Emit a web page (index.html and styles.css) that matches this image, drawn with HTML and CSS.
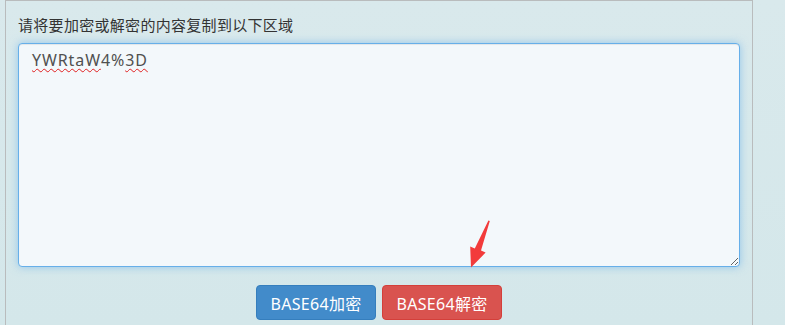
FILE: index.html
```html
<!DOCTYPE html>
<html lang="zh-CN">
<head>
  <meta charset="UTF-8">
  <meta name="viewport" content="width=device-width, initial-scale=1.0">
  <title>BASE64加密解密</title>
  <link rel="stylesheet" href="styles.css">
</head>
<body>
  <div class="panel">
    <label class="tip" for="content">请将要加密或解密的内容复制到以下区域</label>
    <div class="content" id="content" contenteditable="true" spellcheck="false"><span class="typo">YWRtaW</span>4%<span class="typo">3D</span></div>
    <div class="actions">
      <button class="btn btn-blue" id="encode-btn">BASE64加密</button>
      <button class="btn btn-red" id="decode-btn">BASE64解密</button>
    </div>
  </div>

  <!-- red pointer arrow over the decode button -->
  <svg class="arrow" width="785" height="325" viewBox="0 0 785 325">
    <polygon points="489.8,221 481,250.6 485.6,252.6 471,267.5 470.2,246.5 474.8,248.4 488.4,220.6" fill="#f23b3b"/>
  </svg>
</body>
</html>
```

FILE: styles.css
```css
body {
  margin: 0;
  height: 325px;
  overflow: hidden;
  background: linear-gradient(to bottom, #d9e9ec, #d4e7ea);
  font-family: "Noto Sans", "Noto Sans CJK SC", sans-serif;
  color: #333;
}

.panel {
  margin-left: 5px;
  width: 748px;
  height: 340px;
  box-sizing: border-box;
  border: 1px solid #b9bcbd;
  border-bottom: none;
  padding: 13px 12px 0;
  background: transparent;
}

.tip {
  display: block;
  font-size: 15px;
  letter-spacing: 0.3px;
  line-height: 22px;
  color: #333;
  margin-bottom: 7px;
}

.content {
  box-sizing: border-box;
  width: 100%;
  height: 224px;
  padding: 5px 13px;
  border: 1px solid #66afe9;
  border-radius: 4px;
  background: #f3f8fb;
  box-shadow: inset 0 1px 1px rgba(0, 0, 0, 0.075), 0 0 8px rgba(102, 175, 233, 0.6);
  font-size: 16px;
  letter-spacing: 0.9px;
  line-height: 22px;
  color: #505050;
  outline: none;
  resize: both;
  overflow: auto;
}

.typo {
  text-decoration: underline wavy #e02020;
  text-decoration-thickness: 1px;
  text-underline-offset: 2px;
}

.actions {
  display: flex;
  justify-content: center;
  gap: 6px;
  margin-top: 18px;
}

.btn {
  width: 120px;
  height: 35px;
  border-radius: 4px;
  font-family: "Noto Sans", "Noto Sans CJK SC", sans-serif;
  font-size: 16px;
  letter-spacing: 0.3px;
  color: white;
  cursor: pointer;
  padding: 0;
}

.btn-blue {
  background: #428bca;
  border: 1px solid #357ebd;
}

.btn-red {
  background: #d9534f;
  border: 1px solid #d43f3a;
}

.arrow {
  position: absolute;
  top: 0;
  left: 0;
  pointer-events: none;
}
```
